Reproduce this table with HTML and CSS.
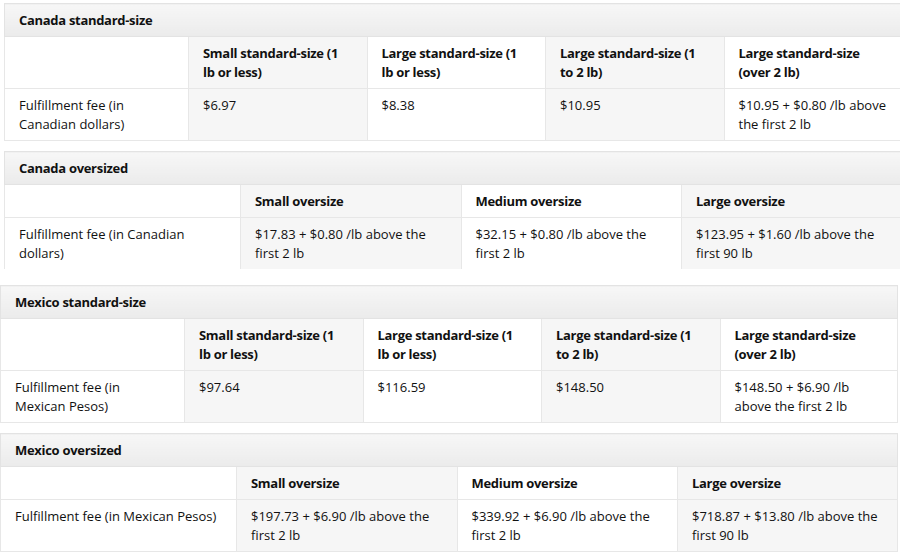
FILE: index.html
```html
<!DOCTYPE html>
<html>
<head>
<meta charset="utf-8">
<link rel="stylesheet" href="styles.css">
</head>
<body>
<div class="page">
  <table class="fees t1">
    <colgroup><col class="c-a"><col class="c-s"><col class="c-s"><col class="c-s"><col></colgroup>
    <tr><th class="title" colspan="5">Canada standard-size</th></tr>
    <tr class="hdr"><td></td><td class="alt">Small standard-size (1 lb or less)</td><td>Large standard-size (1 lb or less)</td><td class="alt">Large standard-size (1 to 2 lb)</td><td>Large standard-size (over 2 lb)</td></tr>
    <tr><td>Fulfillment fee (in Canadian dollars)</td><td class="alt">$6.97</td><td>$8.38</td><td class="alt">$10.95</td><td>$10.95 + $0.80 /lb above the first 2 lb</td></tr>
  </table>

  <div class="clip">
    <table class="fees t2">
      <colgroup><col class="c-b"><col class="c-o"><col class="c-o"><col></colgroup>
      <tr><th class="title" colspan="4">Canada oversized</th></tr>
      <tr class="hdr"><td></td><td class="alt">Small oversize</td><td>Medium oversize</td><td class="alt">Large oversize</td></tr>
      <tr><td>Fulfillment fee (in Canadian dollars)</td><td class="alt">$17.83 + $0.80 /lb above the first 2 lb</td><td>$32.15 + $0.80 /lb above the first 2 lb</td><td class="alt">$123.95 + $1.60 /lb above the first 90 lb</td></tr>
    </table>
  </div>

  <table class="fees t3">
    <colgroup><col class="c-a3"><col class="c-s"><col class="c-s"><col class="c-s"><col></colgroup>
    <tr><th class="title" colspan="5">Mexico standard-size</th></tr>
    <tr class="hdr"><td></td><td class="alt">Small standard-size (1 lb or less)</td><td>Large standard-size (1 lb or less)</td><td class="alt">Large standard-size (1 to 2 lb)</td><td>Large standard-size (over 2 lb)</td></tr>
    <tr><td>Fulfillment fee (in Mexican Pesos)</td><td class="alt">$97.64</td><td>$116.59</td><td class="alt">$148.50</td><td>$148.50 + $6.90 /lb above the first 2 lb</td></tr>
  </table>

  <table class="fees t4">
    <colgroup><col class="c-b4"><col class="c-o"><col class="c-o"><col></colgroup>
    <tr><th class="title" colspan="4">Mexico oversized</th></tr>
    <tr class="hdr"><td></td><td class="alt">Small oversize</td><td>Medium oversize</td><td class="alt">Large oversize</td></tr>
    <tr><td>Fulfillment fee (in Mexican Pesos)</td><td class="alt">$197.73 + $6.90 /lb above the first 2 lb</td><td>$339.92 + $6.90 /lb above the first 2 lb</td><td class="alt">$718.87 + $13.80 /lb above the first 90 lb</td></tr>
  </table>
</div>
</body>
</html>
```
FILE: styles.css
```css
html, body {
  margin: 0;
  padding: 0;
  background: #fff;
}
.page {
  width: 900px;
  height: 556px;
  overflow: hidden;
  font-family: "Open Sans", "Noto Sans", sans-serif;
  font-size: 13px;
  line-height: 19px;
  color: #111;
  display: flex;
  flex-direction: column;
  align-items: flex-start;
}
.fees {
  border-collapse: collapse;
  table-layout: fixed;
  flex: none;
}
.fees td, .fees th {
  border: 1px solid #e7e7e7;
  padding: 7px 14px 6px 14px;
  text-align: left;
  vertical-align: top;
  font-weight: normal;
}
.fees th.title {
  padding: 7px 14px 6px 14px;
  font-weight: bold;
  letter-spacing: -0.3px;
  background: linear-gradient(#f7f7f7, #ebebeb);
  border-color: #e3e3e3;
}
.fees .hdr td {
  font-weight: bold;
  letter-spacing: -0.3px;
}
.fees td.alt {
  background: #f6f6f6;
}
.t1 {
  width: 898px;
  margin: 3px 0 0 4px;
}
.c-a { width: 184px; }
.c-s { width: 178.5px; }
.clip {
  flex: none;
  height: 118px;
  overflow: hidden;
  margin: 10px 0 0 4px;
}
.t2 {
  width: 898px;
}
.c-b { width: 236px; }
.c-o { width: 220.5px; }
.t3 {
  width: 898px;
  margin-top: 16px;
}
.c-a3 { width: 184px; }
.t4 {
  width: 898px;
  margin-top: 10px;
}
.c-b4 { width: 236px; }
```
